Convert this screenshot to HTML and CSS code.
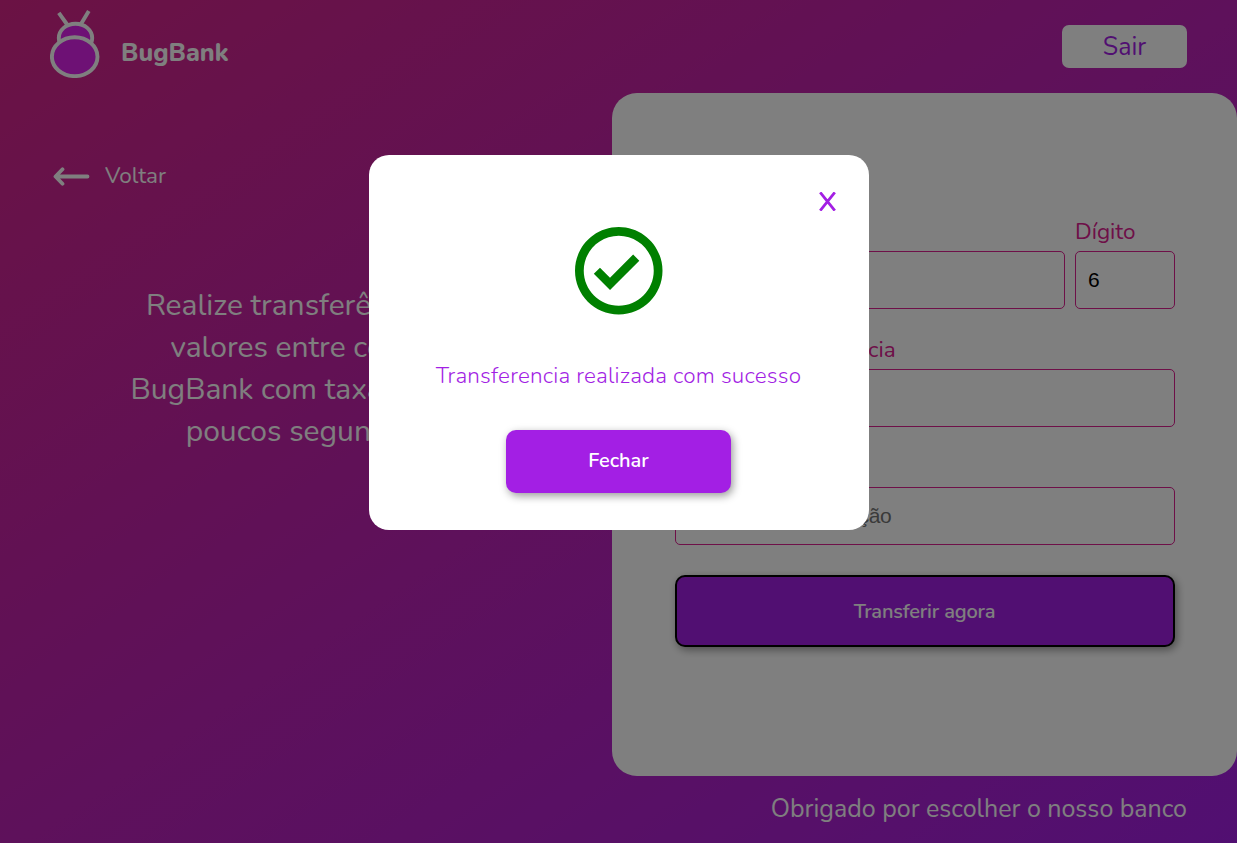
FILE: index.html
```html
<!DOCTYPE html>
<html lang="pt-BR">
<head>
<meta charset="utf-8">
<title>BugBank</title>
<link rel="stylesheet" href="styles.css">
</head>
<body>
<div class="page">
  <header class="header">
    <div class="brand">
      <svg class="logo" width="50" height="68" viewBox="0 0 50 68" fill="#dc22ea" stroke="#fff" stroke-width="3.9">
        <path d="M8.8 2.8 17.5 15M38.8 1 31 14"/>
        <ellipse cx="25.5" cy="28" rx="16.7" ry="14.3"/>
        <ellipse cx="24.7" cy="46.7" rx="22.8" ry="19.4"/>
      </svg>
      <span class="brand-name">BugBank</span>
    </div>
    <button class="logout">Sair</button>
  </header>
  <main class="main">
    <section class="intro">
      <a class="back">
        <svg width="38" height="20" viewBox="0 0 38 20" fill="none" stroke="#fff" stroke-width="3.8" stroke-linecap="round" stroke-linejoin="round"><path d="M35.5 10.5H4M10.5 3.3 3.5 10.5l7 7.2"/></svg>
        <span>Voltar</span>
      </a>
      <p class="pitch">Realize transferência de<br>valores entre contas<br>BugBank com taxa 0 e em<br>poucos segundos.</p>
    </section>
    <form class="card">
      <div class="row">
        <label class="field grow"><span>Número da conta</span><input></label>
        <label class="field digit"><span>Dígito</span><input value="6"></label>
      </div>
      <label class="field"><span>Valor da transferência</span><input></label>
      <label class="field"><span>Descrição</span><input placeholder="Informe uma descrição"></label>
      <button type="button" class="primary submit">Transferir agora</button>
    </form>
  </main>
  <footer class="footer">Obrigado por escolher o nosso banco</footer>
</div>
<div class="overlay">
  <div class="modal">
    <a class="close">
      <svg width="17" height="19" viewBox="0 0 17 19" fill="none" stroke="#a31fe4" stroke-width="2.8"><path d="M1.2.4 15.8 18.6M15.8.4 1.2 18.6"/></svg>
    </a>
    <svg class="check" width="87.5" height="87.5" viewBox="2 2 20 20" fill="green"><path d="M12 2C6.48 2 2 6.48 2 12s4.48 10 10 10 10-4.48 10-10S17.52 2 12 2zm0 18c-4.41 0-8-3.59-8-8s3.59-8 8-8 8 3.59 8 8-3.59 8-8 8zm3.29-11.71L10 13.59l-2.29-2.3-1.41 1.42L10 16.41l6.7-6.71z"/></svg>
    <p class="message">Transferencia realizada com sucesso</p>
    <button class="primary dismiss">Fechar</button>
  </div>
</div>
</body>
</html>
```
FILE: styles.css
```css
* { box-sizing: border-box; margin: 0; padding: 0; }
body { font-family: Nunito, Lato, sans-serif; height: 843px; overflow: hidden; }
button, input { font: inherit; border: 0; }
.page { height: 843px; display: flex; flex-direction: column; color: #fff; background: linear-gradient(to bottom right, #d62588, #a31fe4); }
.header { height: 93px; padding: 0 50px; display: flex; justify-content: space-between; }
.brand { display: flex; padding-top: 10px; gap: 21px; }
.brand-name { font-size: 25px; font-weight: 800; line-height: 30px; margin-top: 28px; }
.logout { width: 125px; height: 43px; margin-top: 25px; padding-top: 1px; border-radius: 7px; background: #fff; color: #a31fe4; font-size: 25px; font-weight: 400; line-height: 42px; }
.main { display: flex; height: 683px; }
.intro { width: 612px; padding: 68px 0 0 52px; }
.back { display: flex; align-items: center; gap: 15px; height: 30px; font-size: 22.5px; }
.back span { padding-bottom: 2px; }
.pitch { margin: 94px 52px 0 0; text-align: center; font-size: 30px; line-height: 42px; white-space: nowrap; }
.card { width: 625px; padding: 123px 62px 0 63px; border-radius: 25px; background: #fff; }
.row { display: flex; gap: 10px; }
.grow { flex: 1; }
.digit { width: 100px; }
.field { display: block; height: 118px; color: #dc2090; font-size: 22.5px; }
.field span { display: block; height: 35px; line-height: 31px; }
.field input { display: block; width: 100%; height: 58px; padding: 0 12px; border: 1px solid #dc2090; border-radius: 5px; background: #fff; color: #000; font: 21px "Liberation Sans", Arial, sans-serif; }
.field input::placeholder { color: #757575; letter-spacing: -.5px; }
.primary { display: block; border-radius: 10px; background: #a31fe4; color: #fff; font-size: 20px; font-weight: 600; box-shadow: 2px 3px 8px rgba(0, 0, 0, .4); }
.submit { width: 500px; height: 72px; margin-top: 5px; padding-right: 1px; border: 2px solid #000; letter-spacing: -.17px; }
.footer { padding: 16px 50px 0; text-align: right; font-size: 25px; line-height: 34px; }
.overlay { position: absolute; inset: 0; display: flex; justify-content: center; align-items: flex-start; padding-top: 155px; background: rgba(0, 0, 0, .5); }
.modal { position: relative; width: 500px; height: 375px; padding-top: 72px; border-radius: 20px; background: #fff; display: flex; flex-direction: column; align-items: center; }
.close { position: absolute; top: 37px; right: 33px; display: flex; }
.check { overflow: visible; }
.message { margin-top: 45.5px; color: #a31fe4; font-size: 22.5px; font-weight: 300; letter-spacing: .19px; line-height: 32px; white-space: nowrap; }
.dismiss { width: 225px; height: 63px; margin-top: 38px; padding-bottom: 2px; flex-shrink: 0; }
```
